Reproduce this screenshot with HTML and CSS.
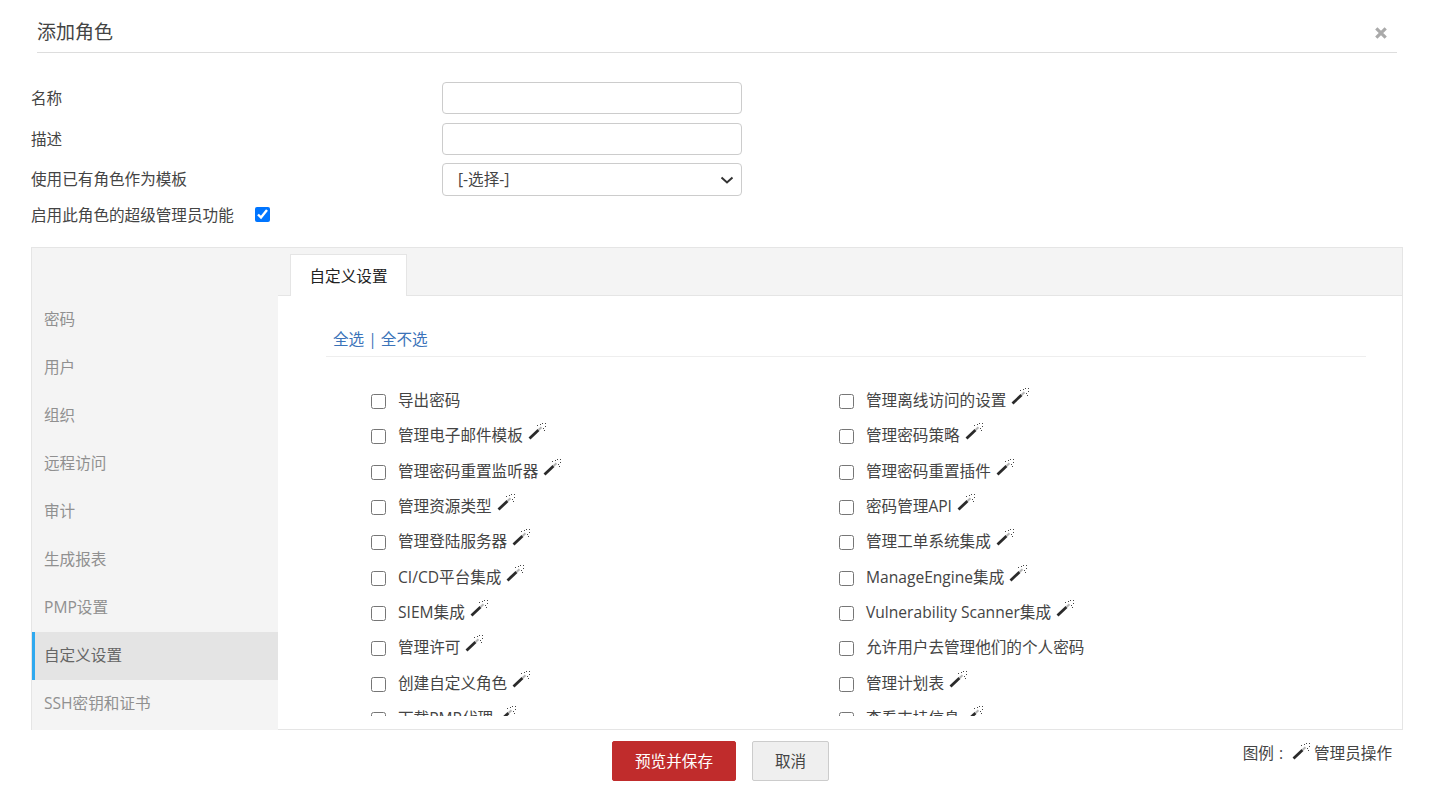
FILE: index.html
```html
<!DOCTYPE html>
<html lang="zh">
<head>
<meta charset="utf-8">
<title>添加角色</title>
<link rel="stylesheet" href="styles.css">
</head>
<body>
<svg class="defs" width="0" height="0" aria-hidden="true">
  <symbol id="wand" viewBox="0 0 18 18">
    <path d="M1.500 15.500 10.500 7" stroke="#2a2a2a" stroke-width="2.800" fill="none"/>
    <path d="M10.500 7 13.500 4.200" stroke="#b5b5b5" stroke-width="2" fill="none"/>
    <path d="M14 0h1v1h-1zM17 3h1v1h-1zM9 2h1v1h-1zM16 7h1v1h-1zM12 1h1v1h-1zM15 5h1v1h-1zM17 0h1v1h-1z" fill="#444"/>
  </symbol>
</svg>
<header class="head">
  <h1 class="title">添加角色</h1>
  <svg class="close" viewBox="0 0 12 12" aria-label="关闭"><path d="M1.300 1.300 10.700 10.700M10.700 1.300 1.300 10.700" stroke="#aaa" stroke-width="3.200" fill="none"/></svg>
</header>
<form class="form">
  <div class="row"><label>名称</label><input class="field" type="text"></div>
  <div class="row"><label>描述</label><input class="field" type="text"></div>
  <div class="row row-select"><label>使用已有角色作为模板</label><select class="field select"><option>[-选择-]</option></select></div>
  <div class="row-check"><label>启用此角色的超级管理员功能</label><input class="super" type="checkbox" checked></div>
</form>
<section class="panel">
  <nav class="side">
    <a>密码</a><a>用户</a><a>组织</a><a>远程访问</a><a>审计</a><a>生成报表</a><a>PMP设置</a><a class="on">自定义设置</a><a>SSH密钥和证书</a>
  </nav>
  <div class="main">
    <div class="tabs"><span class="tab">自定义设置</span></div>
    <div class="body">
      <div class="links"><a>全选</a><i>|</i><a>全不选</a></div>
      <div class="grid">
        <label class="opt"><input type="checkbox">导出密码</label>
        <label class="opt"><input type="checkbox">管理离线访问的设置<svg class="wand"><use href="#wand"/></svg></label>
        <label class="opt"><input type="checkbox">管理电子邮件模板<svg class="wand"><use href="#wand"/></svg></label>
        <label class="opt"><input type="checkbox">管理密码策略<svg class="wand"><use href="#wand"/></svg></label>
        <label class="opt"><input type="checkbox">管理密码重置监听器<svg class="wand"><use href="#wand"/></svg></label>
        <label class="opt"><input type="checkbox">管理密码重置插件<svg class="wand"><use href="#wand"/></svg></label>
        <label class="opt"><input type="checkbox">管理资源类型<svg class="wand"><use href="#wand"/></svg></label>
        <label class="opt"><input type="checkbox">密码管理API<svg class="wand"><use href="#wand"/></svg></label>
        <label class="opt"><input type="checkbox">管理登陆服务器<svg class="wand"><use href="#wand"/></svg></label>
        <label class="opt"><input type="checkbox">管理工单系统集成<svg class="wand"><use href="#wand"/></svg></label>
        <label class="opt"><input type="checkbox">CI/CD平台集成<svg class="wand"><use href="#wand"/></svg></label>
        <label class="opt"><input type="checkbox">ManageEngine集成<svg class="wand"><use href="#wand"/></svg></label>
        <label class="opt"><input type="checkbox">SIEM集成<svg class="wand"><use href="#wand"/></svg></label>
        <label class="opt"><input type="checkbox">Vulnerability Scanner集成<svg class="wand"><use href="#wand"/></svg></label>
        <label class="opt"><input type="checkbox">管理许可<svg class="wand"><use href="#wand"/></svg></label>
        <label class="opt"><input type="checkbox">允许用户去管理他们的个人密码</label>
        <label class="opt"><input type="checkbox">创建自定义角色<svg class="wand"><use href="#wand"/></svg></label>
        <label class="opt"><input type="checkbox">管理计划表<svg class="wand"><use href="#wand"/></svg></label>
        <label class="opt"><input type="checkbox">下载PMP代理<svg class="wand"><use href="#wand"/></svg></label>
        <label class="opt"><input type="checkbox">查看支持信息<svg class="wand"><use href="#wand"/></svg></label>
      </div>
    </div>
  </div>
</section>
<footer class="foot">
  <button class="btn primary" type="button">预览并保存</button>
  <button class="btn" type="button">取消</button>
  <div class="legend">图例<span class="colon">:</span><svg class="wand"><use href="#wand"/></svg> 管理员操作</div>
</footer>
</body>
</html>
```

FILE: styles.css
```css
* { box-sizing: border-box; }
html, body { margin: 0; height: 804px; overflow: hidden; }
body {
  background: #fff;
  color: #444;
  font: 15.6px/21px "Open Sans", "Noto Sans CJK SC", sans-serif;
}
.defs { position: absolute; }
.head {
  height: 53px;
  margin: 0 37px;
  border-bottom: 1px solid #ddd;
  display: flex;
  align-items: center;
  justify-content: space-between;
  padding-top: 13px;
}
.title { margin: 0; font-size: 19px; font-weight: 400; color: #444; }
.close { width: 12px; height: 12px; margin-right: 10px; flex: none; }

.form { padding: 29px 0 0 31px; }
.row { display: grid; grid-template-columns: 411px 300px; align-items: center; height: 32px; margin-bottom: 9px; }
.row-select { height: 33px; margin-bottom: 9px; margin-top: -1px; }
.field {
  width: 300px;
  height: 100%;
  border: 1px solid #ccc;
  border-radius: 4px;
  background: #fff;
  font: inherit;
  color: #444;
  padding: 0 15px;
  outline: none;
}
.select {
  appearance: none;
  background-image: url("data:image/svg+xml,%3Csvg xmlns='http://www.w3.org/2000/svg' viewBox='0 0 14 8'%3E%3Cpath d='M1.5 1.5 7 6.5l5.500-5' fill='none' stroke='%23333' stroke-width='2'/%3E%3C/svg%3E");
  background-repeat: no-repeat;
  background-position: right 7px center;
  background-size: 14px 8px;
}
.row-check { display: flex; align-items: center; height: 21px; }
.super { width: 15px; height: 15px; margin: 0 0 2px 21px; }

.panel {
  width: 1372px;
  height: 483px;
  margin: 21px 0 0 31px;
  background: #f4f4f4;
  border: 1px solid #e5e5e5;
  border-width: 1px 1px 0 1px;
  display: flex;
}
.side { width: 246px; flex: none; padding-top: 48px; background: #f4f4f4; }
.side a { display: flex; align-items: center; height: 48px; padding: 0 0 2px 12px; color: #909090; }
.side a.on { background: #e4e4e4; color: #666; border-left: 3px solid #2fa9ef; padding-left: 9px; }
.main { flex: 1; min-width: 0; display: flex; flex-direction: column; }
.tabs { height: 48px; padding: 6px 0 0 12px; flex: none; border-bottom: 1px solid #e5e5e5; }
.tab {
  display: flex;
  align-items: center;
  justify-content: center;
  width: 117px;
  height: 42px;
  padding-top: 2px;
  background: #fff;
  border: 1px solid #e5e5e5;
  border-bottom: 0;
  color: #222;
  position: relative;
  z-index: 1;
}
.body {
  flex: 1;
  min-height: 0;
  background: #fff;
  border-bottom: 13px solid #fff;
  box-shadow: 0 1px 0 #e5e5e5;
  overflow: hidden;
  margin-bottom: 1px;
  padding: 28px 36px 0 48px;
}
.links { height: 33px; border-bottom: 1px solid #eee; padding-left: 7px; color: #3b73b9; display: flex; align-items: flex-start; gap: 4px; line-height: 31px; }
.links i { font-style: normal; }
.grid { display: grid; grid-template-columns: 468px 1fr; grid-auto-rows: 35.36px; padding: 25.7px 0 0 45px; }
.opt { display: flex; align-items: center; white-space: nowrap; }
.opt input { width: 15px; height: 15px; margin: 2px 12px 0 0; flex: none; }
.wand { width: 18px; height: 18px; margin: -7px 0 0 5px; flex: none; }

.foot { display: flex; align-items: flex-start; padding: 11px 42px 0 612px; }
.btn {
  height: 40px;
  width: 77px;
  font: inherit;
  color: #444;
  background: #efefef;
  border: 1px solid #ccc;
  border-radius: 2px;
  margin-right: 16px;
}
.primary { width: 124px; background: #c02c2c; border-color: #c02c2c; color: #fff; }
.legend { margin-left: auto; display: flex; align-items: center; color: #444; padding-top: 2px; }
.legend .wand { margin: -3px 4px 0 0; }
.colon { margin: 0 9px 0 5px; }
```
